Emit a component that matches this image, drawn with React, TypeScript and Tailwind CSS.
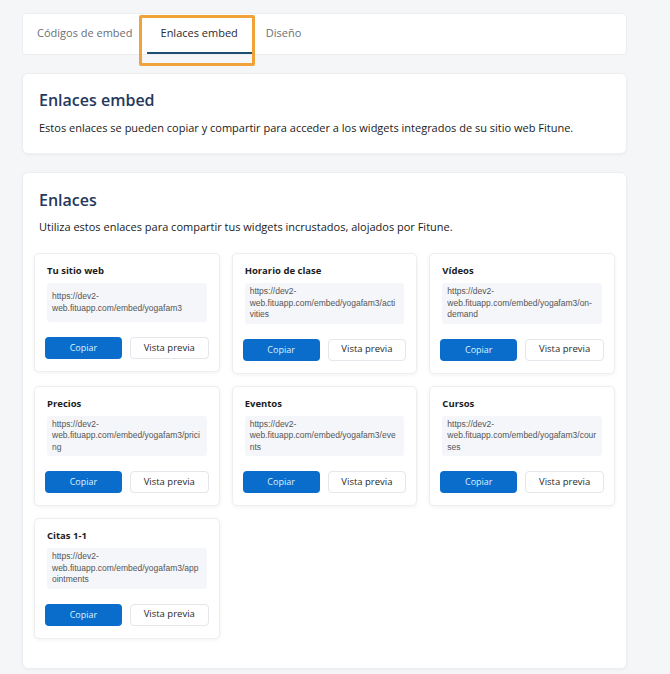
import React from "react"

const links = [
  { title: "Tu sitio web", url: "https://dev2-web.fituapp.com/embed/yogafam3" },
  { title: "Horario de clase", url: "https://dev2-web.fituapp.com/embed/yogafam3/activities" },
  { title: "Vídeos", url: "https://dev2-web.fituapp.com/embed/yogafam3/on-demand" },
  { title: "Precios", url: "https://dev2-web.fituapp.com/embed/yogafam3/pricing" },
  { title: "Eventos", url: "https://dev2-web.fituapp.com/embed/yogafam3/events" },
  { title: "Cursos", url: "https://dev2-web.fituapp.com/embed/yogafam3/courses" },
  { title: "Citas 1-1", url: "https://dev2-web.fituapp.com/embed/yogafam3/appointments" },
]

const tabs = ["Códigos de embed", "Enlaces embed", "Diseño"]

function LinkCard({ title, url }: { title: string; url: string }) {
  return (
    <div className="bg-white border border-[#eceef1] rounded-[5px] shadow-[0_1px_4px_rgba(0,0,0,0.06)] px-[10px] pt-[10px] pb-[12px]">
      <div className="pl-[2px] text-[9.5px] leading-[13px] font-bold text-[#1c1c1c]">{title}</div>
      <div className="mt-[6px] mx-[2px] bg-[#f4f6fa] rounded-[3px] px-[5px] py-[3px] min-h-[39px] flex items-center">
        <p className="w-[149.3px] shrink-0 font-['Liberation_Sans',sans-serif] text-[8.5px] leading-[11.5px] text-[#555] wrap-anywhere">
          {url}
        </p>
      </div>
      <div className="mt-[15px] flex gap-[8px]">
        <button className="flex-1 h-[22px] rounded-[4px] bg-[#0a6ccb] text-[#dff2ff] text-[9px] font-medium">
          Copiar
        </button>
        <button className="flex-1 h-[22px] rounded-[4px] bg-white border border-[#e3e6ea] text-[#2a2a2a] text-[9.5px]">
          Vista previa
        </button>
      </div>
    </div>
  )
}

export default function App() {
  return (
    <div className="min-h-screen bg-[#f5f6f8] pt-[13px] pl-[22px] font-['Open_Sans',sans-serif]">
      <div className="w-[605px] flex flex-col gap-[18px]">
        {/* tab bar */}
        <div className="relative h-[42px] bg-white border border-[#eceef1] rounded-[4px] flex">
          {tabs.map((tab, i) => (
            <div
              key={tab}
              className={
                i === 1
                  ? "px-[14px] flex items-center text-[11px] text-[#2b2b2b] border-b-2 border-[#1d4f73]"
                  : "px-[14px] flex items-center text-[11px] text-[#6b6f76] border-b-2 border-transparent"
              }
            >
              {tab}
            </div>
          ))}
          <div className="pointer-events-none absolute left-[116px] top-[1px] w-[116px] h-[51px] border-[3px] border-[#f0a23b] rounded-[2px]" />
        </div>

        <div className="bg-white border border-[#eceef1] rounded-[6px] shadow-[0_1px_3px_rgba(0,0,0,0.04)] px-[16px] pt-[14px] pb-[17px]">
          <h2 className="text-[16px] leading-[24px] font-semibold text-[#26385c]">Enlaces embed</h2>
          <p className="mt-[8px] text-[11px] leading-[16px] font-medium text-[#1a1a1a]">
            Estos enlaces se pueden copiar y compartir para acceder a los widgets integrados de su sitio web Fitune.
          </p>
        </div>

        <div className="bg-white border border-[#eceef1] rounded-[6px] shadow-[0_1px_3px_rgba(0,0,0,0.04)] pt-[15px] pb-[29px]">
          <div className="px-[16px]">
            <h2 className="text-[16px] leading-[24px] font-semibold text-[#26385c]">Enlaces</h2>
            <p className="mt-[7px] text-[11px] leading-[16px] font-medium text-[#1a1a1a]">
              Utiliza estos enlaces para compartir tus widgets incrustados, alojados por Fitune.
            </p>
          </div>
          <div className="mt-[18px] px-[11px] grid grid-cols-3 gap-[12px] items-start">
            {links.map(link => (
              <LinkCard key={link.title} title={link.title} url={link.url} />
            ))}
          </div>
        </div>
      </div>
    </div>
  )
}
